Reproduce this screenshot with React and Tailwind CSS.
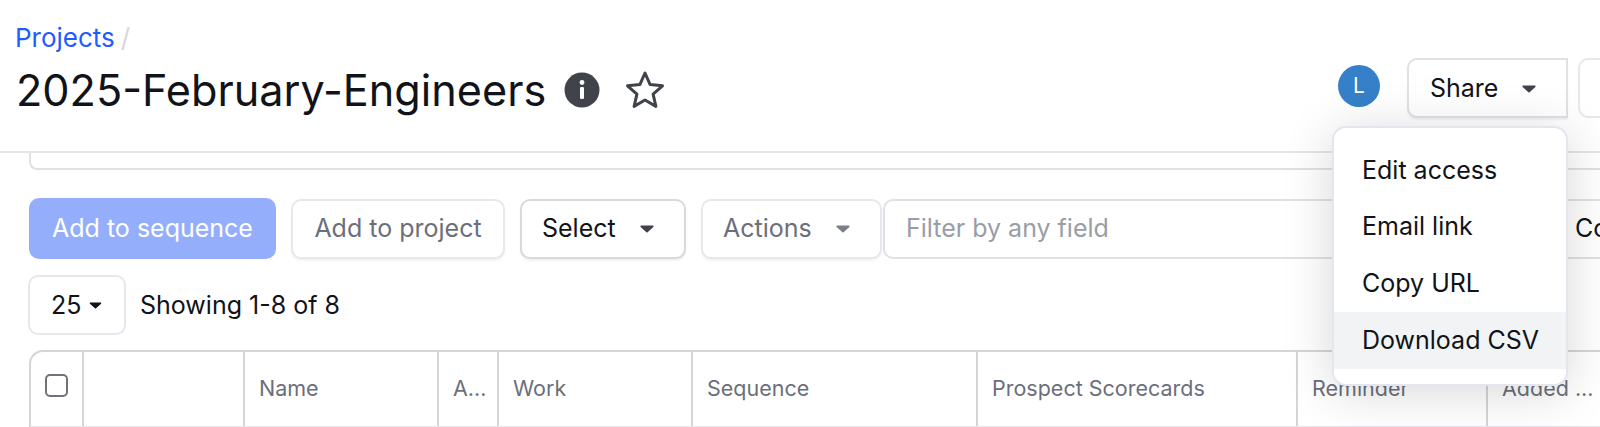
import React from "react";

const Caret = ({ className }) => (
  <svg viewBox="0 0 14 8" className={className} fill="currentColor" aria-hidden="true">
    <path d="M1.2 0.6h11.6c.7 0 1 .8.6 1.3L7.6 7.2c-.3.3-.9.3-1.2 0L.6 1.9C.2 1.4.5.6 1.2.6z" />
  </svg>
);

const columns = [
  ["w-[53px]", ""],
  ["w-[161px]", ""],
  ["w-[194px]", "Name"],
  ["w-[60px]", "A..."],
  ["w-[194px]", "Work"],
  ["w-[285px]", "Sequence"],
  ["w-[320px]", "Prospect Scorecards"],
  ["w-[190px]", "Reminder"],
  ["w-[114px]", "Added ..."],
];

export default function App() {
  return (
    <div className="relative h-[427px] w-[1600px] overflow-hidden bg-white font-['Inter',sans-serif] text-[25px] text-[#111318]">
      <header className="flex h-[153px] items-start justify-between border-b-2 border-[#e3e5ea] pl-[15px]">
        <div className="pt-[22px]">
          <div className="flex h-[32px] items-center gap-[6px] text-[26px] leading-[32px]">
            <span className="text-[#1f5cff]">Projects</span>
            <span className="text-[#d5d7dc]">/</span>
          </div>
          <div className="mt-[10px] flex items-center pl-[1px]">
            <h1 className="text-[43.2px] font-normal leading-[52px] text-[#111318]">2025-February-Engineers</h1>
            <svg viewBox="0 0 36 36" className="ml-[18px] h-[36px] w-[36px]" aria-hidden="true">
              <circle cx="18" cy="18" r="17.5" fill="#40434a" />
              <circle cx="18" cy="10.5" r="2.4" fill="#fff" />
              <rect x="16" y="15" width="4" height="12" rx="1.2" fill="#fff" />
            </svg>
            <svg viewBox="0 0 40 40" className="ml-[25px] h-[40px] w-[40px]" fill="none" stroke="#40434a" strokeWidth="3" strokeLinejoin="round" aria-hidden="true">
              <path d="M20 3l5.1 11.6 12.4 1.2-9.4 8.3 2.8 12.3L20 30l-10.9 6.4 2.8-12.3-9.4-8.3 12.4-1.2z" />
            </svg>
          </div>
        </div>
        <div className="flex items-start pt-[58px]">
          <div className="mt-[7px] flex h-[42px] w-[42px] items-center justify-center rounded-full bg-[#3580c9] text-[21px] text-white">L</div>
          <button className="ml-[27px] flex h-[60px] w-[161px] items-center rounded-l-[10px] border-2 border-[#dfe1e7] bg-white pl-[21px] pt-[1px] shadow-[0_2px_2px_rgba(0,0,0,0.06)]">
            Share
            <Caret className="ml-[24px] h-[8px] w-[14px] text-[#40434a]" />
          </button>
          <div className="ml-[10px] h-[60px] w-[22px] rounded-l-[10px] border-2 border-r-0 border-[#e6e8ed] bg-white" />
        </div>
      </header>

      <div className="ml-[29px] h-[17px] rounded-bl-[8px] border-b-2 border-l-2 border-[#e0e1e5]" />

      <div className="ml-[29px] mt-[28px] flex h-[61px] items-center">
        <button className="h-[61px] w-[247px] shrink-0 rounded-[10px] bg-[#94aefb] pt-[1px] text-white">Add to sequence</button>
        <button className="ml-[15px] h-[60px] w-[214px] shrink-0 rounded-[10px] border-2 border-[#e6e8ed] bg-white pt-[1px] text-[#6b6f7b] shadow-[0_2px_2px_rgba(0,0,0,0.05)]">Add to project</button>
        <button className="ml-[15px] flex h-[60px] w-[166px] shrink-0 items-center rounded-[10px] border-2 border-[#d7d9de] bg-white pl-[20px] pt-[1px] text-[#111318] shadow-[0_2px_2px_rgba(0,0,0,0.06)]">
          Select
          <Caret className="ml-[24px] h-[8px] w-[14px] text-[#40434a]" />
        </button>
        <button className="ml-[15px] flex h-[60px] w-[181px] shrink-0 items-center rounded-[10px] border-2 border-[#e6e8ed] bg-white pl-[20px] pt-[1px] text-[#6b6f7b] shadow-[0_2px_2px_rgba(0,0,0,0.05)]">
          Actions
          <Caret className="ml-[24px] h-[8px] w-[14px] text-[#7b7f8a]" />
        </button>
        <div className="ml-[1px] flex h-[60px] w-[670px] shrink-0 items-center rounded-l-[10px] border-2 border-[#dfe1e6] pl-[21px] pt-[1px] text-[#9a9da6]">Filter by any field</div>
        <button className="flex h-[60px] w-[100px] shrink-0 items-center border-2 border-[#dfe1e6] bg-white pl-[20px] pt-[1px] whitespace-nowrap text-[#111318]">Columns</button>
      </div>

      <div className="ml-[28px] mt-[16px] flex h-[60px] items-center">
        <button className="flex h-[60px] w-[98px] items-center rounded-[10px] border-2 border-[#e6e8ed] bg-white pl-[21px] pt-[1px]">
          25
          <Caret className="ml-[8px] h-[7px] w-[13px] text-[#111318]" />
        </button>
        <span className="ml-[14px] pt-[1px]">Showing 1-8 of 8</span>
      </div>

      <div className="ml-[29px] mt-[15px] flex h-[78px] w-[1571px] rounded-tl-[14px] border-2 border-r-0 border-[#d4d5da] border-b-[#e3e5ea] text-[21.5px] text-[#6b6f7b]">
        {columns.map(([width, label], i) => (
          <div key={i} className={`${width} flex shrink-0 items-center border-r-2 border-[#d4d5da] pb-[2px] pl-[14px] whitespace-nowrap last:border-r-0`}>
            {i === 0 ? (
              <span className="mb-[5px] block h-[23px] w-[23px] rounded-[5px] border-2 border-[#6f7278]" />
            ) : label}
          </div>
        ))}
      </div>

      <div className="absolute left-[1332px] top-[126px] flex h-[260px] w-[236px] flex-col rounded-[14px] border-2 border-[#e3e6ec] bg-white pt-[15px] text-[#111318] shadow-[0_6px_50px_rgba(0,0,0,0.16)]">
        <div className="flex h-[56px] items-center pl-[28px]">Edit access</div>
        <div className="flex h-[56px] items-center pl-[28px]">Email link</div>
        <div className="flex h-[57px] items-center pl-[28px]">Copy URL</div>
        <div className="flex h-[57px] items-center bg-[#f2f3f5] pl-[28px]">Download CSV</div>
      </div>
    </div>
  );
}
